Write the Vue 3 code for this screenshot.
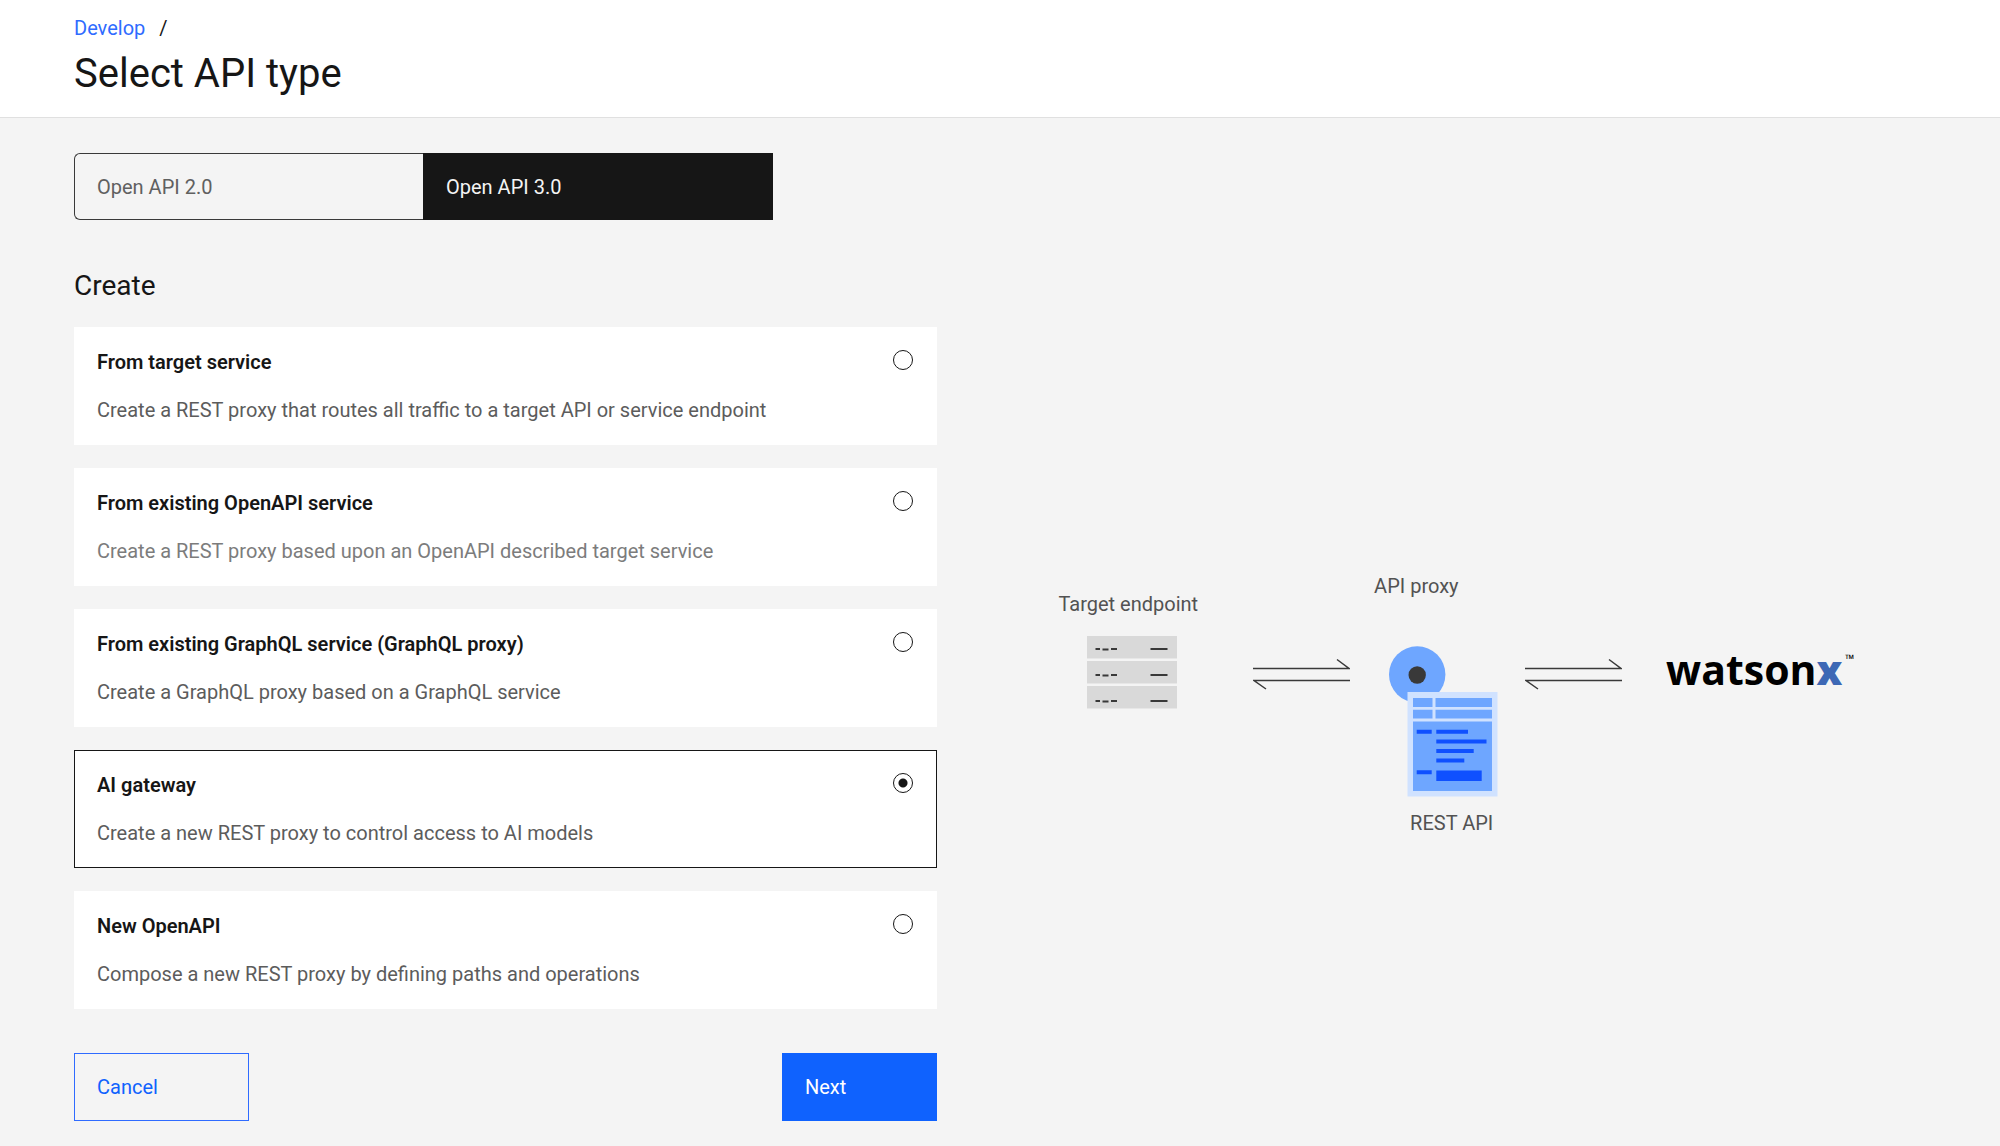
<template>
    <div class="page">
        <header class="page-header">
            <nav class="breadcrumb" aria-label="Breadcrumb">
                <a href="#">Develop</a>
                <span>/</span>
            </nav>
            <h1>Select API type</h1>
        </header>
        <main class="content">
            <form class="form" @submit.prevent>
                <div class="switcher">
                    <button v-for="v in versions" :key="v" type="button" :aria-pressed="version === v" :class="{ active: version === v }" @click="version = v">{{ v }}</button>
                </div>
                <h2>Create</h2>
                <div class="tiles">
                    <label v-for="option in options" :key="option.id" class="tile" :class="{ selected: selected === option.id, muted: option.muted }">
                        <span class="tile-text">
                            <strong>{{ option.title }}</strong>
                            <span class="description">{{ option.description }}</span>
                        </span>
                        <input v-model="selected" type="radio" name="api-type" :value="option.id">
                    </label>
                </div>
                <div class="actions">
                    <button type="button" class="cancel">Cancel</button>
                    <button type="submit" class="next">Next</button>
                </div>
            </form>
            <section class="diagram">
                <div class="endpoint">
                    <span>Target endpoint</span>
                    <svg width="90" height="73" viewBox="0 0 90 73" aria-hidden="true">
                        <g v-for="(y, i) in [0, 25, 50]" :key="y">
                            <rect :y="y" width="90" height="22.5" fill="#d9d9d9" />
                            <path :d="`M8.500 ${13 + y + i}h4.500M15.500 ${13.5 + y + i}h6M24 ${13 + y + i}h6M63.500 ${13 + y + i}h17`" stroke="#393939" stroke-width="2.2" />
                        </g>
                    </svg>
                </div>
                <svg class="arrows" width="97" height="32" viewBox="0 0 97 32" aria-hidden="true">
                    <path d="M0 10.500H96L84 1.500M97 22.500H1L13 31" />
                </svg>
                <div class="proxy">
                    <span>API proxy</span>
                    <svg width="109" height="151" viewBox="0 0 109 151" aria-hidden="true">
                        <circle cx="28.200" cy="28.500" r="28.200" fill="#6ea6ff" />
                        <circle cx="28.200" cy="29" r="8.700" fill="#393939" />
                        <rect x="18.500" y="46" width="90" height="104.500" fill="#d0e2ff" />
                        <path d="M24 52h19.500v9H24zM46.500 52H103v9H46.500zM24 63.800h19.500v8.800H24zM46.500 63.800H103v8.800H46.500zM24 75.500H103V145H24z" fill="#6ea6ff" />
                        <path d="M27.700 85.800h15M47.300 85.800h31.700M47.300 95.400h50.200M47.300 105h37.400M47.300 114.500h28M27.700 126.200h15" stroke="#0f50ff" stroke-width="4" />
                        <rect x="47.300" y="124.500" width="45.400" height="10.500" fill="#0f50ff" />
                    </svg>
                    <span class="rest-label">REST API</span>
                </div>
                <svg class="arrows" width="97" height="32" viewBox="0 0 97 32" aria-hidden="true">
                    <path d="M0 10.500H96L84 1.500M97 22.500H1L13 31" />
                </svg>
                <div class="watsonx">watson<b>x</b><sup>™</sup></div>
            </section>
        </main>
    </div>
</template>
<script setup>
import { ref } from 'vue'

const versions = ['Open API 2.0', 'Open API 3.0']
const version = ref('Open API 3.0')
const selected = ref('ai')

const options = [
    { id: 'target', title: 'From target service', description: 'Create a REST proxy that routes all traffic to a target API or service endpoint' },
    { id: 'existing', title: 'From existing OpenAPI service', description: 'Create a REST proxy based upon an OpenAPI described target service', muted: true },
    { id: 'graphql', title: 'From existing GraphQL service (GraphQL proxy)', description: 'Create a GraphQL proxy based on a GraphQL service' },
    { id: 'ai', title: 'AI gateway', description: 'Create a new REST proxy to control access to AI models' },
    { id: 'new', title: 'New OpenAPI', description: 'Compose a new REST proxy by defining paths and operations' }
]
</script>
<style>
body {
    margin: 0;
    background: #f4f4f4;
}
</style>
<style scoped>
.page {
    min-height: 100vh;
    background: #f4f4f4;
    color: #161616;
    font-family: Roboto, "Liberation Sans", sans-serif;
    font-size: 20px;
    line-height: 24px;
}

.page * {
    box-sizing: border-box;
}

.page-header {
    padding: 16px 74px 19px;
    background: #fff;
    border-bottom: 1px solid #e0e0e0;
}

.breadcrumb {
    display: flex;
    gap: 14px;
    margin-bottom: 10px;
}

.breadcrumb a {
    color: #2f6bff;
    text-decoration: none;
}

h1 {
    margin: 0;
    font-size: 40px;
    font-weight: 400;
    line-height: 48px;
}

h2 {
    margin: 48px 0 23px;
    font-size: 28px;
    font-weight: 400;
    line-height: 36px;
}

.content {
    display: flex;
    padding: 35px 24px 24px 74px;
}

.form {
    flex: 0 1 863px;
}

button {
    font: inherit;
    text-align: left;
    cursor: pointer;
    border-radius: 0;
    padding: 0 22px;
}

.switcher {
    display: flex;
    max-width: 699px;
}

.switcher button {
    flex: 1;
    height: 67px;
    border: 1px solid #393939;
    background: transparent;
    color: #606060;
}

.switcher button:first-child {
    border-radius: 6px 0 0 6px;
    border-right: none;
}

.switcher button.active {
    background: #161616;
    border-color: #161616;
    color: #f4f4f4;
}

.tiles {
    display: flex;
    flex-direction: column;
    gap: 23px;
}

.tile {
    display: flex;
    justify-content: space-between;
    align-items: flex-start;
    padding: 22px;
    background: #fff;
    border: 1px solid #fff;
    cursor: pointer;
}

.tile.selected {
    border-color: #161616;
}

.tile-text {
    display: flex;
    flex-direction: column;
    gap: 24px;
}

.tile strong {
    font-weight: 600;
}

.description {
    color: #5c5c5c;
}

.muted .description {
    color: #7c7c7c;
}

.tile input {
    flex: none;
    appearance: none;
    width: 20px;
    height: 20px;
    margin: 0 1px;
    border: 1px solid #161616;
    border-radius: 50%;
}

.tile input:checked {
    background: radial-gradient(circle, #161616 4px, transparent 5px);
}

.actions {
    display: flex;
    justify-content: space-between;
    margin-top: 44px;
}

.actions button {
    height: 68px;
}

.cancel {
    width: 175px;
    border: 1px solid #2f6bff;
    background: transparent;
    color: #0f62fe;
}

.next {
    width: 155px;
    border: 1px solid #0f62fe;
    background: #0f62fe;
    color: #fff;
}

.diagram {
    flex: 1;
    display: flex;
    justify-content: center;
    align-items: flex-start;
    padding-top: 421px;
    color: #525252;
}

.endpoint {
    display: flex;
    flex-direction: column;
    gap: 20px;
    margin-top: 18px;
}

.endpoint svg {
    margin-left: 29px;
}

.arrows {
    flex: none;
    margin: 84px 0 0 55px;
    fill: none;
    stroke: #393939;
    stroke-width: 1.5;
}

.proxy {
    display: flex;
    flex-direction: column;
    margin: 0 -28px 0 24px;
}

.proxy svg {
    margin: 48px 0 14px 15px;
}

.rest-label {
    margin-left: 36px;
}

.watsonx {
    display: flex;
    margin: 71px 0 0 44px;
    color: #000;
    font-family: "Open Sans", "Noto Sans", sans-serif;
    font-size: 41px;
    font-weight: 700;
    line-height: 48px;
}

.watsonx b {
    color: #3d68b5;
}

.watsonx sup {
    margin-left: 3px;
    font-size: 12px;
    line-height: 28px;
}
</style>
